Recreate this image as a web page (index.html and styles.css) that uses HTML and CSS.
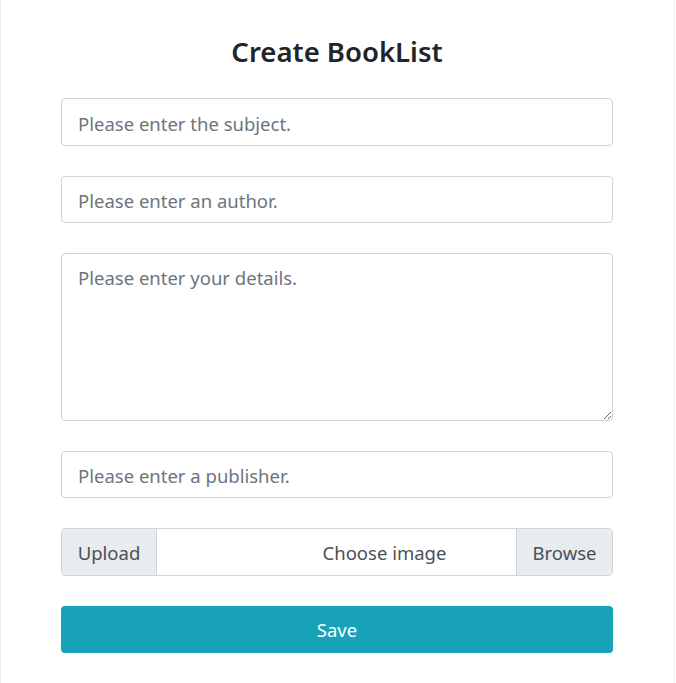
FILE: index.html
```html
<!DOCTYPE html>
<html>
<head>
<meta charset="utf-8">
<link rel="stylesheet" href="styles.css">
</head>
<body>
<div class="page">
  <h1 class="title">Create BookList</h1>
  <form class="form">
    <input class="field" type="text" placeholder="Please enter the subject.">
    <input class="field" type="text" placeholder="Please enter an author.">
    <textarea class="field area" placeholder="Please enter your details."></textarea>
    <input class="field" type="text" placeholder="Please enter a publisher.">
    <div class="group">
      <span class="addon">Upload</span>
      <span class="file">Choose image</span>
      <span class="browse">Browse</span>
    </div>
    <button class="save" type="button">Save</button>
  </form>
</div>
</body>
</html>
```
FILE: styles.css
```css
html, body { margin: 0; padding: 0; background: #fff; }
body { font-family: "Noto Sans", "Open Sans", sans-serif; color: #212529; }
.page {
  width: 675px;
  height: 683px;
  box-sizing: border-box;
  border-left: 1px solid #eeeeee;
  border-right: 1px solid #eeeeee;
  padding: 31px 0 0 60px;
}
.title {
  margin: 0 0 25px 0;
  width: 552px;
  text-align: center;
  font-size: 27.5px;
  font-weight: 600;
  line-height: 42px;
  color: #212529;
}
.form { display: flex; flex-direction: column; gap: 30px; width: 552px; }
.field {
  display: block;
  box-sizing: border-box;
  width: 552px;
  height: 47.5px;
  margin: 0;
  padding: 3px 16px 0 16px;
  border: 1px solid #ced4da;
  border-radius: 4px;
  font-family: inherit;
  font-size: 18.5px;
  color: #495057;
  background: #fff;
  outline: none;
}
.field::placeholder { color: #6c757d; opacity: 1; }
.area { height: 167.5px; padding: 10px 16px; resize: vertical; line-height: 28px; }
.group {
  display: flex;
  height: 47.5px;
  box-sizing: border-box;
  border: 1px solid #ced4da;
  border-radius: 4px;
  overflow: hidden;
  font-size: 18.5px;
  color: #495057;
}
.addon, .browse {
  display: flex;
  align-items: center;
  justify-content: center;
  width: 95px;
  padding-top: 2px;
  box-sizing: border-box;
  background: #e9ecef;
  flex: none;
}
.addon { border-right: 1px solid #ced4da; }
.browse { border-left: 1px solid #ced4da; width: 96px; }
.file {
  flex: 1;
  display: flex;
  align-items: center;
  justify-content: center;
  padding-left: 96px;
  padding-top: 2px;
}
.save {
  height: 47.5px;
  padding-top: 2px;
  border: none;
  border-radius: 4px;
  background: #17a2b8;
  color: #fff;
  font-family: inherit;
  font-size: 18.5px;
}
```
